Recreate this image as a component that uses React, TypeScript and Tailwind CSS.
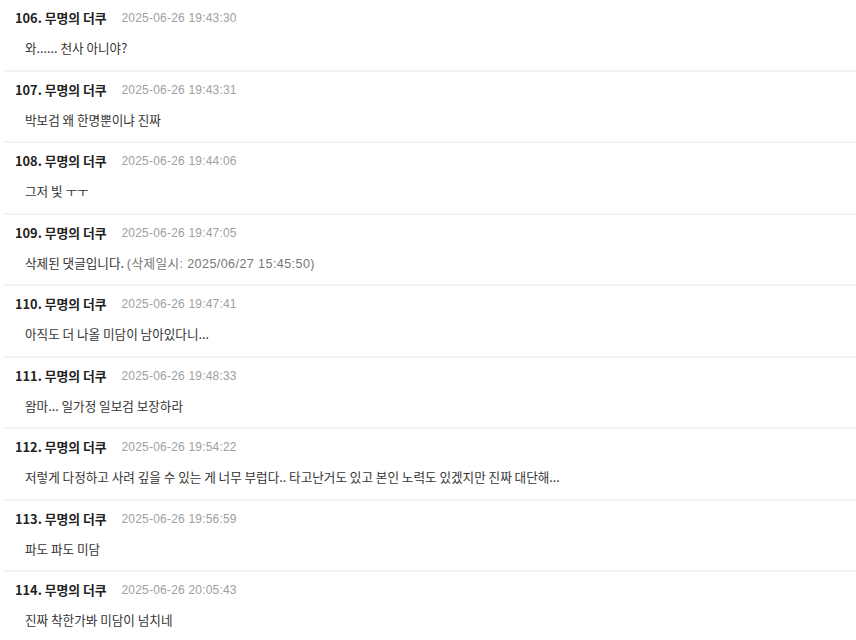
import React from "react";

const rows: { n: number; date: string; body: React.ReactNode }[] = [
  { n: 106, date: "2025-06-26 19:43:30", body: "와...... 천사 아니야?" },
  { n: 107, date: "2025-06-26 19:43:31", body: "박보검 왜 한명뿐이냐 진짜" },
  { n: 108, date: "2025-06-26 19:44:06", body: "그저 빛 ㅜㅜ" },
  {
    n: 109,
    date: "2025-06-26 19:47:05",
    body: (
      <>
        삭제된 댓글입니다.{" "}
        <span className="text-[#777] tracking-[0.4px] font-['Liberation_Sans','Noto_Sans_CJK_KR',sans-serif]">
          (삭제일시: 2025/06/27 15:45:50)
        </span>
      </>
    ),
  },
  { n: 110, date: "2025-06-26 19:47:41", body: "아직도 더 나올 미담이 남아있다니..." },
  { n: 111, date: "2025-06-26 19:48:33", body: "왐마... 일가정 일보검 보장하라" },
  {
    n: 112,
    date: "2025-06-26 19:54:22",
    body: "저렇게 다정하고 사려 깊을 수 있는 게 너무 부럽다.. 타고난거도 있고 본인 노력도 있겠지만 진짜 대단해...",
  },
  { n: 113, date: "2025-06-26 19:56:59", body: "파도 파도 미담" },
  { n: 114, date: "2025-06-26 20:05:43", body: "진짜 착한가봐 미담이 넘치네" },
];

export default function App() {
  return (
    <div
      className="w-[856px] h-[640px] overflow-hidden bg-white"
      style={{ fontFamily: '"Noto Sans CJK KR", "Noto Sans", sans-serif' }}
    >
      {rows.map((r) => (
        <div key={r.n} className="h-[71.5px] ml-1 border-b-2 border-[#f3f3f3] flex flex-col">
          <div className="pt-2 pl-[11px] flex items-center h-7 gap-[15px] leading-5">
            <span className="text-[12.8px] font-bold text-[#222]">{r.n}. 무명의 더쿠</span>
            <span className="text-[12px] tracking-[0.2px] text-[#a0a0a0] font-['Liberation_Sans',sans-serif]">
              {r.date}
            </span>
          </div>
          <div className="mt-[10px] pl-[21px] h-5 leading-5 text-[12.6px] text-[#333]">{r.body}</div>
        </div>
      ))}
    </div>
  );
}
